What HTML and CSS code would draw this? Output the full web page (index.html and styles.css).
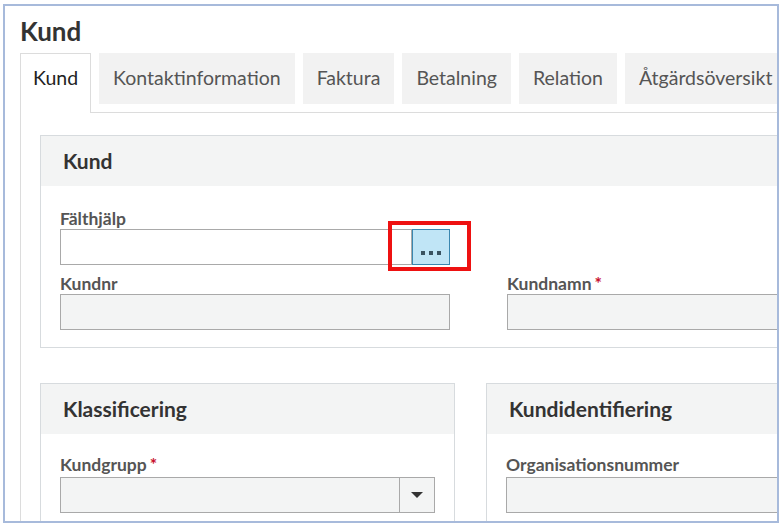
FILE: index.html
```html
<!DOCTYPE html>
<html lang="sv">
<head>
<meta charset="utf-8">
<title>Kund</title>
<link rel="stylesheet" href="styles.css">
</head>
<body>
<div class="frame">
  <h1 class="title">Kund</h1>
  <div class="tabs">
    <div class="tab active">Kund</div>
    <div class="tab">Kontaktinformation</div>
    <div class="tab">Faktura</div>
    <div class="tab">Betalning</div>
    <div class="tab">Relation</div>
    <div class="tab">Åtgärdsöversikt</div>
  </div>
  <div class="panel">
    <section class="card">
      <div class="card-head">Kund</div>
      <div class="card-body grid">
        <div class="field">
          <div class="label">Fälthjälp</div>
          <div class="lookup">
            <div class="input white"></div>
            <div class="dots" title="..."><span></span><span></span><span></span></div>
            <span class="highlight"></span>
          </div>
        </div>
        <div></div>
        <div class="field">
          <div class="label">Kundnr</div>
          <div class="input"></div>
        </div>
        <div class="field">
          <div class="label">Kundnamn<span class="req">*</span></div>
          <div class="input"></div>
        </div>
      </div>
    </section>
    <div class="row2">
      <section class="card card-klass">
        <div class="card-head">Klassificering</div>
        <div class="card-body body2">
          <div class="field">
            <div class="label">Kundgrupp<span class="req">*</span></div>
            <div class="select">
              <div class="select-value"></div>
              <div class="select-arrow"><span class="caret"></span></div>
            </div>
          </div>
        </div>
      </section>
      <section class="card card-ident">
        <div class="card-head">Kundidentifiering</div>
        <div class="card-body body2">
          <div class="field">
            <div class="label">Organisationsnummer</div>
            <div class="input"></div>
          </div>
        </div>
      </section>
    </div>
  </div>
</div>
</body>
</html>
```

FILE: styles.css
```css
* { box-sizing: border-box; }

body {
  margin: 0;
  background: #ffffff;
  font-family: Lato, "Open Sans", "Liberation Sans", sans-serif;
  color: #333;
}

.frame {
  margin: 4px 0 0 3px;
  width: 776px;
  height: 519px;
  border: 2px solid #a7badb;
  overflow: hidden;
  padding: 11px 0 0 15px;
  background: #fff;
}

.title {
  margin: 0 0 8px 0;
  font-size: 26px;
  line-height: 28px;
  font-weight: 700;
  color: #333;
}

.tabs {
  display: flex;
  align-items: flex-start;
  gap: 8px;
  margin-bottom: -1px;
  position: relative;
  z-index: 1;
  white-space: nowrap;
}

.tab {
  height: 51px;
  line-height: 50px;
  padding: 0 14px;
  background: #f2f2f2;
  color: #555;
  font-size: 19.5px;
}

.tab.active {
  height: 60px;
  line-height: 48px;
  background: #fff;
  color: #222;
  border: 1px solid #dcdcdc;
  border-bottom: none;
  padding: 0 12px 0 12px;
}

.panel {
  width: 820px;
  border-top: 1px solid #dcdcdc;
  border-left: 1px solid #dcdcdc;
  padding: 22px 0 0 19px;
  height: 420px;
}

.card {
  border: 1px solid #d7dbde;
  background: #fff;
}

.card-head {
  height: 50px;
  line-height: 50px;
  padding-left: 22px;
  background: #f3f4f4;
  font-size: 21px;
  font-weight: 700;
  color: #333;
}

.card-body {
  padding: 23px 0 17px 19px;
}

.grid {
  display: grid;
  grid-template-columns: 390px 1fr;
  column-gap: 57px;
  row-gap: 9px;
}

.label {
  font-size: 17.5px;
  line-height: 20px;
  font-weight: 700;
  color: #555;
  margin-bottom: 0;
}

.req {
  color: #c8102e;
  margin-left: 3px;
}

.input {
  height: 36px;
  border: 1px solid #a9a9a9;
  background: #f3f4f4;
}

.input.white { background: #fff; flex: 1; }

.lookup {
  display: flex;
  position: relative;
}

.dots {
  width: 38px;
  height: 36px;
  background: #c0e5f6;
  border: 1px solid #3a87b0;
  display: flex;
  justify-content: center;
  align-items: flex-end;
  gap: 4px;
  padding-bottom: 9px;
}

.dots span {
  width: 4px;
  height: 4px;
  background: #3a5361;
}

.highlight {
  position: absolute;
  left: 328px;
  top: -8px;
  width: 83px;
  height: 50px;
  border: 4px solid #ee1111;
}

.row2 {
  display: flex;
  gap: 31px;
  margin-top: 35px;
}

.card-klass { width: 415px; }
.card-ident { flex: 1; }

.body2 {
  padding: 21px 19px 20px 19px;
}

.body2 .label { margin-bottom: 2px; }

.select {
  display: flex;
  height: 36px;
  border: 1px solid #a9a9a9;
  background: #f3f4f4;
}

.select-value { flex: 1; }

.select-arrow {
  width: 35px;
  border-left: 1px solid #a9a9a9;
  display: flex;
  align-items: center;
  justify-content: center;
}

.caret {
  width: 0;
  height: 0;
  border-left: 6px solid transparent;
  border-right: 6px solid transparent;
  border-top: 6px solid #333;
}
```
